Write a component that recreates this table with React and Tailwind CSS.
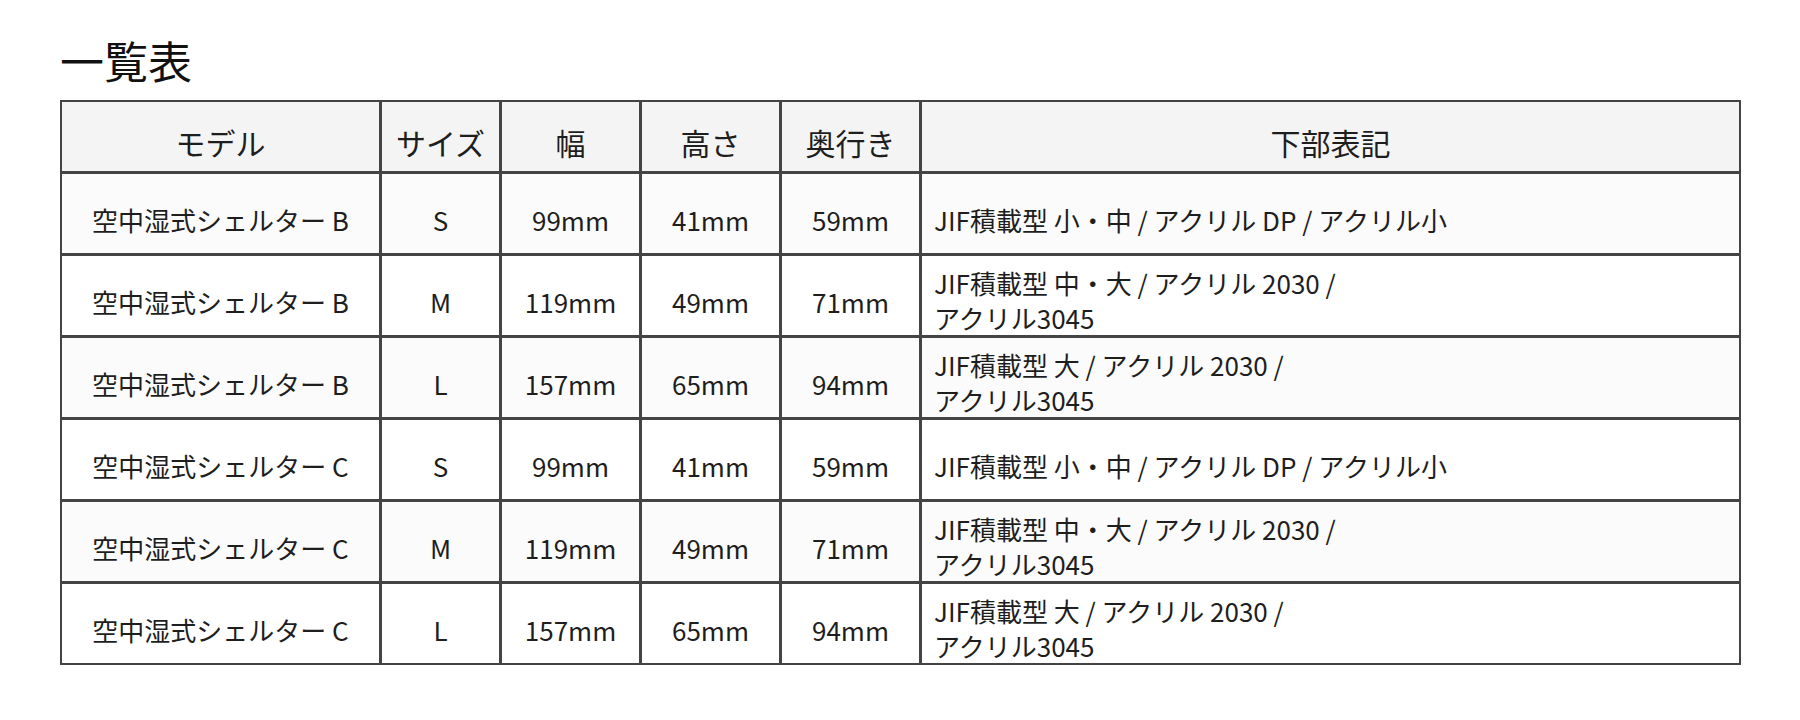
import React from "react";

const rows = [
  ["空中湿式シェルター B", "S", "99mm", "41mm", "59mm", ["JIF積載型 小・中 / アクリル DP / アクリル小"]],
  ["空中湿式シェルター B", "M", "119mm", "49mm", "71mm", ["JIF積載型 中・大 / アクリル 2030 /", "アクリル3045"]],
  ["空中湿式シェルター B", "L", "157mm", "65mm", "94mm", ["JIF積載型 大 / アクリル 2030 /", "アクリル3045"]],
  ["空中湿式シェルター C", "S", "99mm", "41mm", "59mm", ["JIF積載型 小・中 / アクリル DP / アクリル小"]],
  ["空中湿式シェルター C", "M", "119mm", "49mm", "71mm", ["JIF積載型 中・大 / アクリル 2030 /", "アクリル3045"]],
  ["空中湿式シェルター C", "L", "157mm", "65mm", "94mm", ["JIF積載型 大 / アクリル 2030 /", "アクリル3045"]],
];

const headers = ["モデル", "サイズ", "幅", "高さ", "奥行き", "下部表記"];

export default function App() {
  return (
    <div
      className="w-[1800px] h-[720px] bg-white text-[#1e1e1e]"
      style={{ fontFamily: '"Noto Sans CJK JP", "Noto Sans", sans-serif' }}
    >
      <div className="pl-[60px] pt-[38px]">
        <h1 className="text-[44px] leading-none font-normal text-[#111] mb-[18px]">一覧表</h1>
        <div className="w-[1681px] border-2 border-[#444] bg-[#444] grid grid-cols-[317px_117px_137px_137px_137px_1fr] grid-rows-[69px_repeat(6,79px)] gap-[3px]">
          {headers.map((h) => (
            <div
              key={h}
              className="bg-[#f4f4f4] flex items-center justify-center pt-[12px] text-[30px] leading-[1.33]"
            >
              {h}
            </div>
          ))}
          {rows.map((r, i) => {
            const bg = i % 2 === 0 ? "bg-[#fbfbfb]" : "bg-white";
            return (
              <React.Fragment key={i}>
                {r.slice(0, 5).map((c, j) => (
                  <div
                    key={j}
                    className={`${bg} flex items-center justify-center pt-[14px] text-[26px] leading-[1.33]`}
                  >
                    {c}
                  </div>
                ))}
                <div
                  className={`${bg} flex flex-col justify-center pl-[12px] text-[26px] leading-[1.33] ${
                    r[5].length === 1 ? "pt-[14px]" : "pt-[10px]"
                  }`}
                >
                  {r[5].map((l, k) => (
                    <div key={k}>{l}</div>
                  ))}
                </div>
              </React.Fragment>
            );
          })}
        </div>
      </div>
    </div>
  );
}
